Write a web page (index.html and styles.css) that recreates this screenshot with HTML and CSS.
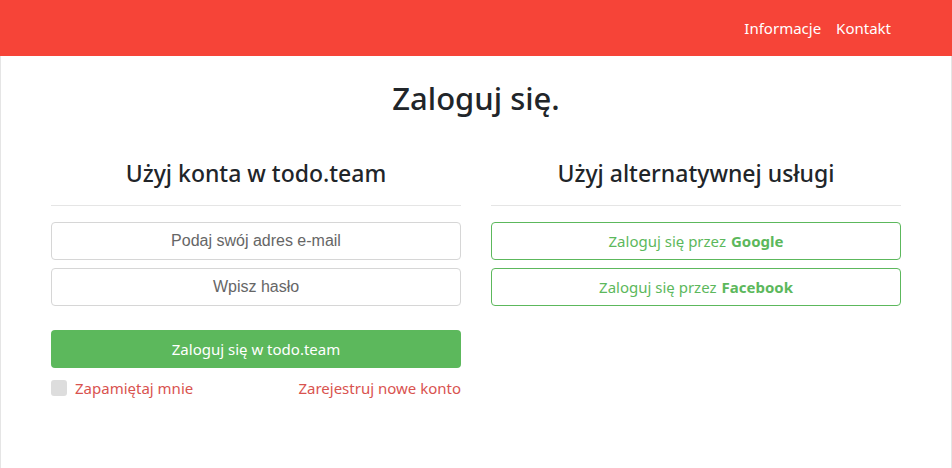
FILE: index.html
```html
<!DOCTYPE html>
<html lang="pl">
<head>
  <meta charset="UTF-8" />
  <meta name="viewport" content="width=device-width, initial-scale=1.0"/>
  <title>Zaloguj się - todo.team</title>
  <link rel="stylesheet" href="styles.css">
</head>
<body>

<header class="topbar">
  <nav class="topbar-nav">
    <a href="#">Informacje</a>
    <a href="#">Kontakt</a>
  </nav>
</header>

<main class="page">
  <div class="container">
    <h1 class="page-title">Zaloguj się.</h1>

    <div class="row">
      <section class="col">
        <h3 class="col-title">Użyj konta w todo.team</h3>
        <hr />
        <form class="login-form">
          <input type="email" class="field" placeholder="Podaj swój adres e-mail" />
          <input type="password" class="field" placeholder="Wpisz hasło" />
          <button type="submit" class="btn-primary">Zaloguj się w todo.team</button>
          <div class="form-footer">
            <label class="remember"><span class="checkbox"></span> Zapamiętaj mnie</label>
            <a href="#" class="register">Zarejestruj nowe konto</a>
          </div>
        </form>
      </section>

      <section class="col">
        <h3 class="col-title">Użyj alternatywnej usługi</h3>
        <hr />
        <a href="#" class="btn-outline">Zaloguj się przez <b>Google</b></a>
        <a href="#" class="btn-outline">Zaloguj się przez <b>Facebook</b></a>
      </section>
    </div>
  </div>
</main>

</body>
</html>
```

FILE: styles.css
```css
* {
  box-sizing: border-box;
  margin: 0;
  padding: 0;
}

body {
  font-family: "Noto Sans", "Open Sans", sans-serif;
  color: #212529;
  background-color: white;
}

a {
  text-decoration: none;
}

.topbar {
  background-color: #f64438;
  height: 56px;
  display: flex;
  justify-content: flex-end;
  align-items: center;
  padding-right: 61px;
}

.topbar-nav {
  display: flex;
  gap: 15px;
}

.topbar-nav a {
  color: white;
  font-size: 15px;
}

.page {
  border-left: 1px solid #e5e5e5;
  border-right: 1px solid #e5e5e5;
  min-height: 412px;
}

.container {
  width: 880px;
  margin: 0 auto;
}

.page-title {
  text-align: center;
  font-size: 31px;
  font-weight: 500;
  padding-top: 22px;
  line-height: 1.3;
}

.row {
  display: flex;
  margin-top: 41px;
}

.col {
  flex: 1;
  padding: 0 15px;
}

.col-title {
  text-align: center;
  font-size: 23px;
  font-weight: 500;
  line-height: 1.3;
}

hr {
  border: none;
  border-top: 1px solid #e5e5e5;
  margin: 16px 0 16px;
}

.field {
  display: block;
  width: 100%;
  height: 38px;
  margin-bottom: 8px;
  border: 1px solid #d6d6d6;
  border-radius: 4px;
  text-align: center;
  font-family: "Liberation Sans", Arial, sans-serif;
  font-size: 16px;
}

.field::placeholder {
  color: #666;
}

.btn-primary {
  display: block;
  width: 100%;
  height: 38px;
  margin-top: 24px;
  background-color: #5cb85c;
  color: white;
  border: none;
  border-radius: 4px;
  font-family: inherit;
  font-size: 15px;
}

.form-footer {
  display: flex;
  justify-content: space-between;
  align-items: center;
  margin-top: 10px;
  font-size: 15px;
}

.remember {
  display: flex;
  align-items: center;
  gap: 8px;
  color: #d9534f;
}

.checkbox {
  width: 16px;
  height: 16px;
  border-radius: 3px;
  background-color: #dddddd;
}

.register {
  color: #d9534f;
}

.btn-outline {
  display: flex;
  justify-content: center;
  align-items: center;
  gap: 5px;
  height: 38px;
  margin-bottom: 8px;
  border: 1px solid #5cb85c;
  border-radius: 4px;
  color: #5cb85c;
  font-size: 15px;
}

.btn-outline b {
  font-weight: 700;
}
```
